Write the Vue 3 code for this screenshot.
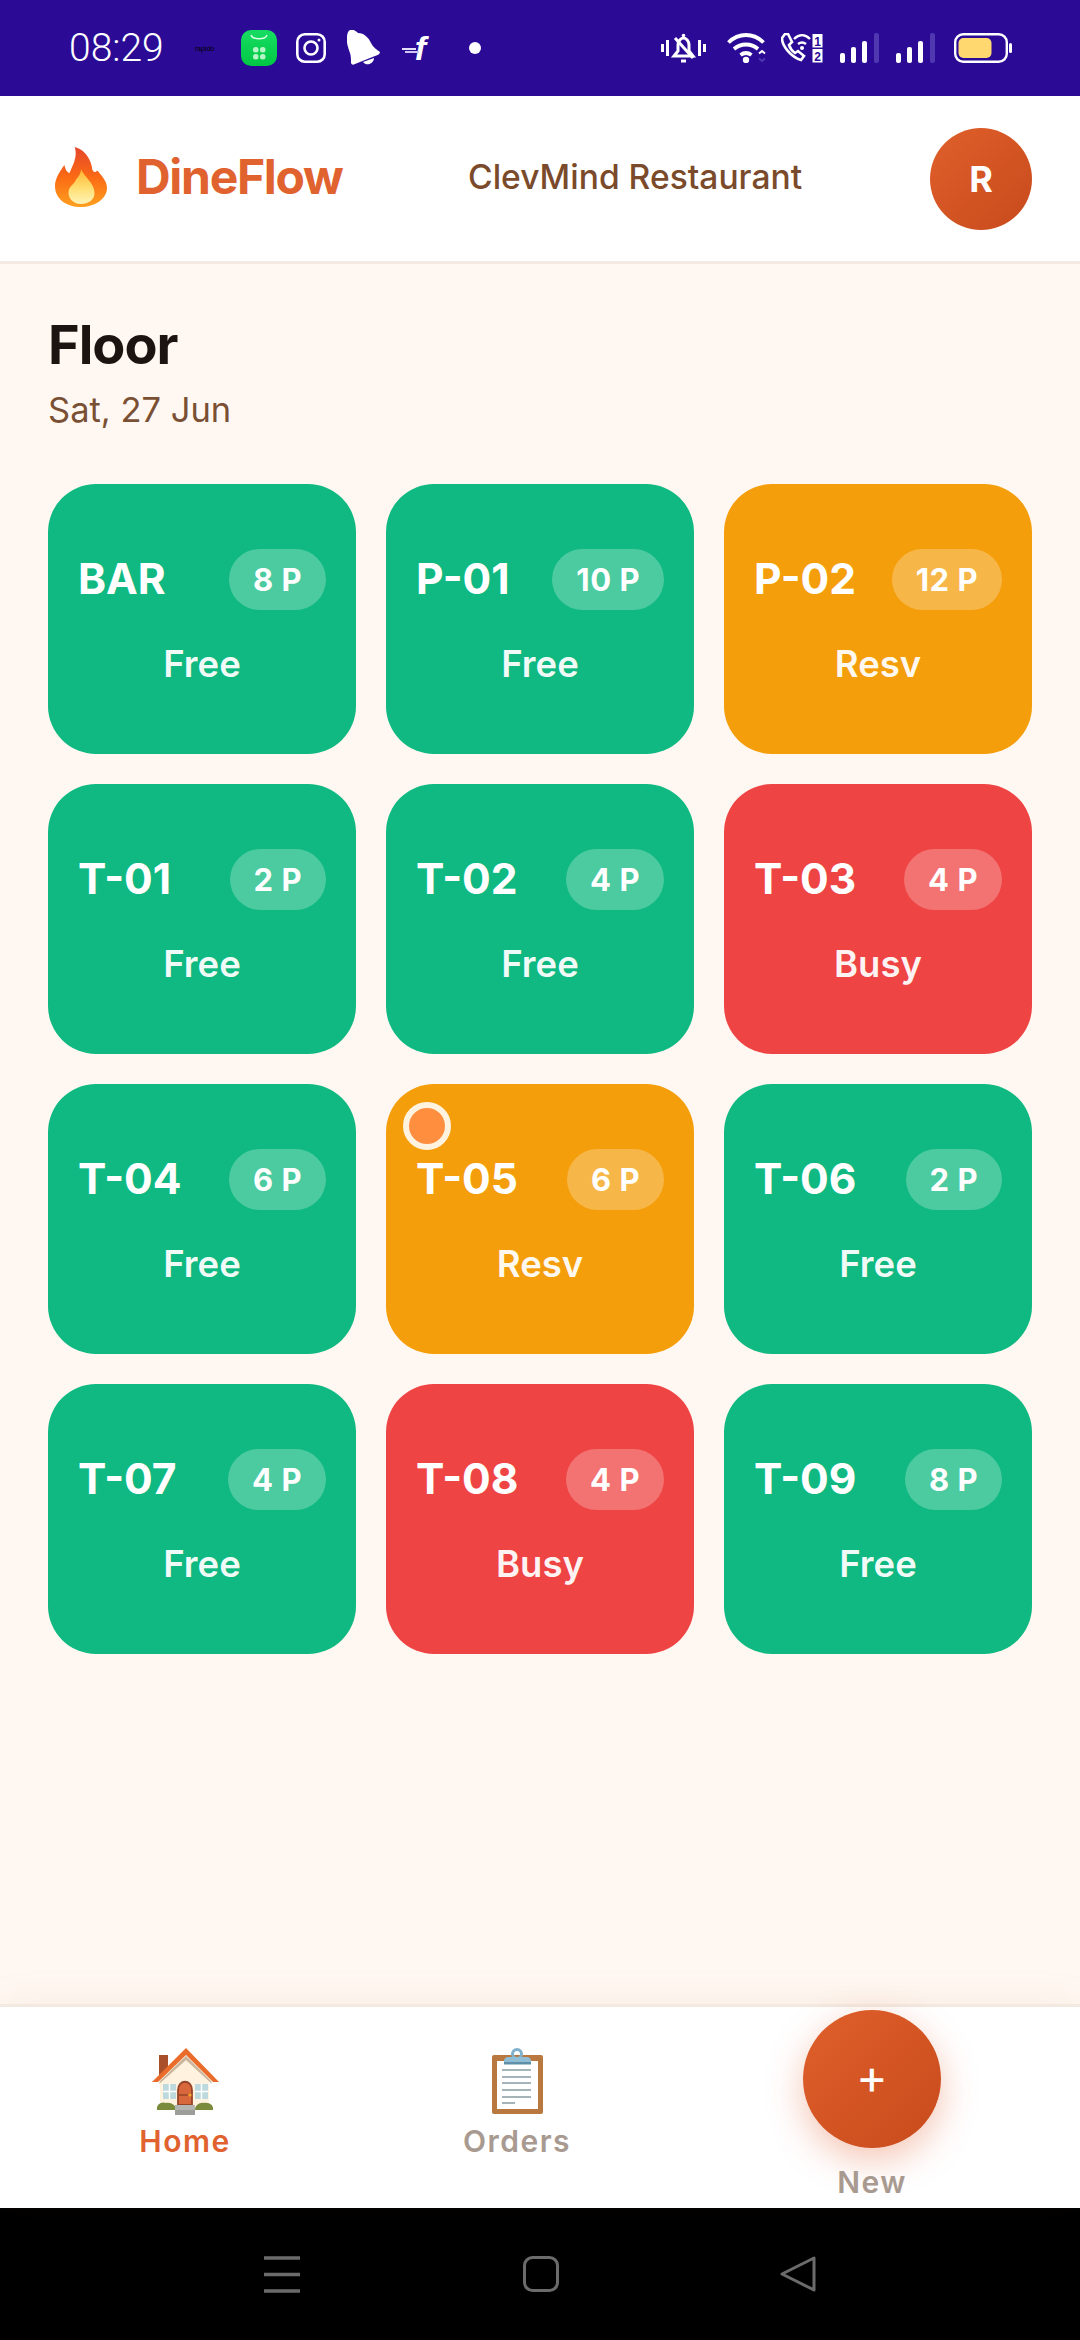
<script setup>
const tables = [
  { name: 'BAR', seats: '8 P', status: 'free' },
  { name: 'P-01', seats: '10 P', status: 'free' },
  { name: 'P-02', seats: '12 P', status: 'resv' },
  { name: 'T-01', seats: '2 P', status: 'free' },
  { name: 'T-02', seats: '4 P', status: 'free' },
  { name: 'T-03', seats: '4 P', status: 'busy' },
  { name: 'T-04', seats: '6 P', status: 'free' },
  { name: 'T-05', seats: '6 P', status: 'resv', touched: true },
  { name: 'T-06', seats: '2 P', status: 'free' },
  { name: 'T-07', seats: '4 P', status: 'free' },
  { name: 'T-08', seats: '4 P', status: 'busy' },
  { name: 'T-09', seats: '8 P', status: 'free' },
]

const labels = { free: 'Free', resv: 'Resv', busy: 'Busy' }
</script>

<template>
  <div class="screen">
    <div class="statusbar">
      <div class="status-left">
        <span class="time">08:29</span>
        <span class="rapido">rapido</span>
        <svg class="ic-store" width="36" height="36" viewBox="0 0 36 36">
          <defs>
            <linearGradient id="storeBg" x1="0" y1="0" x2="0" y2="1">
              <stop offset="0" stop-color="#17dc62" />
              <stop offset="1" stop-color="#00c844" />
            </linearGradient>
          </defs>
          <rect width="36" height="36" rx="10" fill="url(#storeBg)" />
          <path d="M10 5c1.500 5 14.500 5 16 0" fill="none" stroke="#d8ffe4" stroke-width="1.500" />
          <g fill="#b5f5c8">
            <rect x="12" y="17" width="5.500" height="5.500" rx="2.500" />
            <rect x="19" y="17" width="5.500" height="5.500" rx="2.500" />
            <rect x="12" y="24" width="5.500" height="5.500" rx="2.500" />
            <rect x="19" y="24" width="5.500" height="5.500" rx="2.500" />
          </g>
        </svg>
        <svg class="ic-insta" width="30" height="30" viewBox="0 0 30 30" fill="none" stroke="#fff" stroke-width="2.600">
          <rect x="1.300" y="1.300" width="27.400" height="27.400" rx="7.500" />
          <circle cx="15" cy="15" r="6.500" />
          <circle cx="23" cy="7" r="1.500" fill="#fff" stroke="none" />
        </svg>
        <svg class="ic-bell" width="33" height="36" viewBox="0 0 33 36" fill="#fff">
          <path d="M3 0C6-1 9 1 11 3 17 3 22 8 24 13 26 17 29 19 33 22 33 24 31 25 28 26L8 34C6 35 5 35 4 33 4 29 4 26 3 23 1 18-1 11 0 7 0 4 1 1 3 0Z" />
          <path d="M16 32 27 28C27 33 20 37 16 32Z" />
        </svg>
        <span class="ic-f"><i class="speed"></i><b>f</b></span>
        <span class="ic-dot"></span>
      </div>
      <div class="status-right">
        <svg class="ic-mute" width="45" height="30" viewBox="0 0 45 30" fill="none" stroke="#fff" stroke-width="3">
          <path d="M1.500 11v8M6.500 7v16M38.500 7v16M43.500 11v8" />
          <path d="M13 23l4-5v-6c0-4 3-7 5.500-7s5.500 3 5.500 7v6l4 5Z" />
          <path d="M14 5l18 20" />
          <circle cx="22.500" cy="2.500" r="1.800" fill="#fff" stroke="none" />
          <path d="M20 28h5" />
        </svg>
        <svg class="ic-wifi" width="40" height="30" viewBox="0 0 40 30" fill="none" stroke="#fff" stroke-width="3.800">
          <path d="M1.500 9.500c10-10 25-10 35 0" />
          <path d="M7 16c7-6 17-6 24 0" />
          <path d="M13.500 22c3.500-2.500 7.500-2.500 11 0" />
          <circle cx="19" cy="27" r="3.200" fill="#fff" stroke="none" />
          <path d="M32 20.500l3-2.500 3 2.500" stroke-width="2" />
          <path d="M32 25.500l3 2.500 3-2.500" stroke="#4f38b0" stroke-width="2" />
        </svg>
        <svg class="ic-call" width="42" height="30" viewBox="0 0 42 30" fill="none" stroke="#fff">
          <path d="M4 1 1 5c0 8 9 19 19 22l3-4-6-5-3 2c-3-2-5-5-6-8l3-3-4-8Z" stroke-width="2.600" />
          <path d="M13 6c5-5 11-5 16 0M17 11c2.500-2 5.500-2 8 0" stroke-width="2.400" />
          <circle cx="21" cy="15" r="2" fill="#fff" stroke="none" />
          <rect x="31.500" y="1" width="10" height="13.500" fill="#fff" stroke="none" />
          <rect x="31.500" y="16" width="10" height="13.500" fill="#fff" stroke="none" />
          <text x="36.500" y="12.500" text-anchor="middle" class="sim" stroke="none">1</text>
          <text x="36.500" y="27.500" text-anchor="middle" class="sim" stroke="none">2</text>
        </svg>
        <svg class="ic-signal" width="39" height="30" viewBox="0 0 39 30">
          <rect x="0" y="20" width="5" height="10" rx="2" fill="#fff" />
          <rect x="11" y="14" width="5" height="16" rx="2" fill="#fff" />
          <rect x="22" y="8" width="5" height="22" rx="2" fill="#fff" />
          <rect x="34" y="0" width="5" height="30" rx="2" fill="#4f38b0" />
        </svg>
        <svg class="ic-signal" width="39" height="30" viewBox="0 0 39 30">
          <rect x="0" y="20" width="5" height="10" rx="2" fill="#fff" />
          <rect x="11" y="14" width="5" height="16" rx="2" fill="#fff" />
          <rect x="22" y="8" width="5" height="22" rx="2" fill="#fff" />
          <rect x="34" y="0" width="5" height="30" rx="2" fill="#4f38b0" />
        </svg>
        <svg class="ic-battery" width="58" height="30" viewBox="0 0 58 30">
          <rect x="1.200" y="1.200" width="51.600" height="27.600" rx="8" fill="none" stroke="#fff" stroke-width="2.400" />
          <rect x="4.500" y="5" width="33" height="20" rx="5" fill="#ffd970" />
          <rect x="55" y="10" width="3" height="10" rx="1.500" fill="#fff" />
        </svg>
      </div>
    </div>

    <header class="topbar">
      <div class="brand">
        <svg class="flame" width="52" height="60" viewBox="0 0 50 60" preserveAspectRatio="none">
          <defs>
            <linearGradient id="flameOuter" x1="0" y1="0" x2="0" y2="1">
              <stop offset="0" stop-color="#e5472c" />
              <stop offset="0.5" stop-color="#fb6a14" />
              <stop offset="1" stop-color="#ffa01f" />
            </linearGradient>
            <linearGradient id="flameInner" x1="0" y1="0" x2="0" y2="1">
              <stop offset="0" stop-color="#ffb52e" />
              <stop offset="0.6" stop-color="#ffe27a" />
              <stop offset="1" stop-color="#fff3b8" />
            </linearGradient>
          </defs>
          <path d="M19 0C30 3 35 14 36 23 37 25 39 26 40 24 40 24 41 23 42 25 46 30 50 35 50 41 50 52 38 60 25 60 11 60 0 52 0 39 0 31 5 24 9 18 10 22 11 25 14 26 17 18 22 10 19 0Z" fill="url(#flameOuter)" />
          <path d="M25 22C28 30 38 36 38 46 38 53 32 57 25 57 18 57 13 52 13 46 13 39 18 38 20 33 22 30 25 27 25 22Z" fill="url(#flameInner)" />
        </svg>
        <span class="brand-name">DineFlow</span>
      </div>
      <span class="restaurant">ClevMind Restaurant</span>
      <div class="avatar">R</div>
    </header>

    <main class="floor">
      <h1>Floor</h1>
      <p class="date">Sat, 27 Jun</p>
      <div class="grid">
        <div v-for="t in tables" :key="t.name" class="table" :class="t.status">
          <span v-if="t.touched" class="touch"></span>
          <div class="table-top">
            <span class="table-name">{{ t.name }}</span>
            <span class="seats">{{ t.seats }}</span>
          </div>
          <div class="table-status">{{ labels[t.status] }}</div>
        </div>
      </div>
    </main>

    <nav class="bottomnav">
      <div class="nav-item active">
        <svg width="67" height="68" viewBox="0 0 67 68">
          <rect x="7" y="7" width="9" height="20" fill="#a9502a" />
          <path d="M8 62V30L34 7l23 23v32Z" fill="#fff3df" />
          <path d="M34 8 8 33l-1 3 27-24 26 24-1-3Z" fill="#c9b39a" />
          <path d="M34 7 6 34H0L34 0l33 34h-6Z" fill="#ea6c2a" />
          <rect x="11" y="36" width="13" height="15" fill="#bcd9de" />
          <rect x="43" y="36" width="13" height="15" fill="#bcd9de" />
          <path d="M17.500 36v15M11 43.500h13M49.500 36v15M43 43.500h13" stroke="#fff" stroke-width="1.500" />
          <path d="M26 57V42c0-11 14-11 14 0v15Z" fill="#d9673c" stroke="#96452a" stroke-width="1.800" />
          <circle cx="38" cy="47" r="1.600" fill="#f5a623" />
          <path d="M27 47h9" stroke="#96452a" stroke-width="1.500" />
          <path d="M5 62c-1-6 5-9 9-7 5-1 10 2 10 7ZM43 62c0-5 5-8 9-7 5-1 10 2 9 7Z" fill="#7b8b3c" />
          <rect x="23" y="57" width="20" height="5" fill="#b4b4b0" />
          <rect x="23" y="62" width="20" height="5" fill="#9d9d9a" />
        </svg>
        <span>Home</span>
      </div>
      <div class="nav-item">
        <svg class="clipboard" width="51" height="66" viewBox="0 0 51 66">
          <rect y="7" width="51" height="59" rx="2" fill="#b87840" />
          <rect x="5" y="13" width="41" height="48" fill="#fff" />
          <g stroke="#a5b4b8" stroke-width="1.800">
            <path d="M10 22h29M10 29h29M10 35h29M10 42h29M10 49h29M10 55h13" />
          </g>
          <circle cx="25" cy="6" r="4.500" fill="none" stroke="#7fb0cc" stroke-width="3" />
          <path d="M12 16v-3c0-3 2-4 4-4h19c2 0 4 1 4 4v3Z" fill="#8fbdd4" />
          <rect x="12" y="14" width="27" height="2.500" fill="#5f8fa8" />
        </svg>
        <span>Orders</span>
      </div>
      <div class="nav-item new">
        <div class="fab">+</div>
        <span>New</span>
      </div>
    </nav>

    <div class="systembar">
      <svg class="sys-menu" width="36" height="37" viewBox="0 0 36 37" fill="none" stroke="#6b6b6b" stroke-width="3.400">
        <path d="M0 2h36M0 18.500h36M0 35h36" />
      </svg>
      <svg class="sys-home" width="36" height="36" viewBox="0 0 36 36" fill="none" stroke="#6b6b6b" stroke-width="3">
        <rect x="1.500" y="1.500" width="33" height="33" rx="8" />
      </svg>
      <svg class="sys-back" width="36" height="36" viewBox="0 0 36 36" fill="none" stroke="#6b6b6b" stroke-width="3" stroke-linejoin="round">
        <path d="M2 18 34 2v32Z" />
      </svg>
    </div>
  </div>
</template>

<style scoped>
.screen {
  width: 1080px;
  height: 2340px;
  display: flex;
  flex-direction: column;
  overflow: hidden;
  background: #fff8f2;
  font-family: Inter, "Noto Sans", sans-serif;
}

.statusbar {
  height: 96px;
  flex: none;
  background: #2b0b96;
  display: flex;
  align-items: center;
  justify-content: space-between;
  padding: 0 68px 0 69px;
}

.status-left,
.status-right {
  display: flex;
  align-items: center;
}

.time {
  width: 92px;
  color: #fff;
  font-family: Roboto, sans-serif;
  font-weight: 300;
  font-size: 39px;
}

.rapido {
  width: 24px;
  margin-left: 34px;
  color: #000;
  font-size: 7px;
  font-family: "Liberation Sans", sans-serif;
}

.ic-store { margin-left: 22px; }
.ic-insta { margin-left: 19px; }
.ic-bell { margin-left: 21px; }

.ic-f {
  position: relative;
  width: 25px;
  height: 30px;
  margin-left: 22px;
  padding-right: 1px;
  box-sizing: border-box;
  color: #fff;
  font-family: "Liberation Sans", sans-serif;
  font-size: 34px;
  font-style: italic;
  line-height: 30px;
  text-align: right;
}

.speed {
  position: absolute;
  left: 0;
  top: 15px;
  width: 14px;
  height: 2px;
  background: #e4e0f8;
  box-shadow: 3px 3px 0 #cfc8f2;
}

.ic-dot {
  width: 12px;
  height: 12px;
  margin-left: 42px;
  border-radius: 50%;
  background: #fff;
}

.ic-wifi { margin-left: 21px; }
.ic-call { margin-left: 14px; }
.ic-signal { margin-left: 17px; }
.ic-battery { margin-left: 19px; }

.sim {
  fill: #2b0b96;
  font-family: "Liberation Sans", sans-serif;
  font-size: 12px;
  font-weight: 700;
}

.topbar {
  height: 168px;
  flex: none;
  background: #fff;
  border-bottom: 3px solid #f3ebe3;
  display: flex;
  align-items: center;
  padding: 0 48px 0 55px;
  box-sizing: border-box;
}

.brand {
  width: 413px;
  display: flex;
  align-items: center;
  gap: 29px;
}

.flame {
  margin-bottom: 3px;
}

.brand-name {
  margin-bottom: 5px;
  color: #e0622f;
  font-size: 48px;
  font-weight: 700;
  letter-spacing: -1.300px;
}

.restaurant {
  flex: 1;
  margin-bottom: 5px;
  color: #7a4a2b;
  font-size: 33.600px;
  font-weight: 500;
}

.avatar {
  width: 102px;
  height: 102px;
  border-radius: 50%;
  background: linear-gradient(135deg, #e0602b, #c84a1c);
  color: #fff;
  font-size: 36px;
  font-weight: 700;
  display: flex;
  align-items: center;
  justify-content: center;
}

.floor {
  flex: 1;
  padding: 48px 48px 0;
}

h1 {
  margin: 0;
  color: #1c1410;
  font-size: 54px;
  font-weight: 700;
  letter-spacing: -1px;
  line-height: 66px;
}

.date {
  margin: 12px 0 0;
  color: #7a5035;
  font-size: 34.500px;
  line-height: 40px;
}

.grid {
  margin-top: 54px;
  display: grid;
  grid-template-columns: repeat(3, 1fr);
  gap: 30px;
}

.table {
  position: relative;
  height: 270px;
  box-sizing: border-box;
  padding: 0 30px 4px;
  border-radius: 48px;
  color: #fff;
  display: flex;
  flex-direction: column;
  justify-content: center;
  gap: 32px;
}

.table.free { background: #10b981; }
.table.resv { background: #f59e0b; }
.table.busy { background: #ef4444; }

.table-top {
  display: flex;
  align-items: center;
  justify-content: space-between;
}

.table-name {
  margin-bottom: 2px;
  font-size: 42.500px;
  font-weight: 700;
}

.seats {
  height: 61px;
  padding: 0 24px;
  border-radius: 31px;
  background: rgba(255, 255, 255, 0.25);
  font-size: 31px;
  font-weight: 700;
  letter-spacing: 0.500px;
  display: flex;
  align-items: center;
}

.table-status {
  text-align: center;
  font-size: 36.500px;
  font-weight: 600;
  color: rgba(255, 255, 255, 0.95);
}

.touch {
  position: absolute;
  left: 17px;
  top: 18px;
  width: 48px;
  height: 48px;
  box-sizing: border-box;
  border: 6px solid #fff3e0;
  border-radius: 50%;
  background: #ff8f3f;
}

.bottomnav {
  position: relative;
  height: 204px;
  flex: none;
  box-sizing: border-box;
  background: #fff;
  border-top: 3px solid #f3e9e0;
  box-shadow: 0 -6px 36px rgba(160, 90, 40, 0.06);
  display: grid;
  grid-template-columns: 370px 294px 1fr;
}

.nav-item {
  display: flex;
  flex-direction: column;
  align-items: center;
  padding-top: 41px;
  color: #a89a90;
  font-size: 30px;
  font-weight: 600;
  letter-spacing: 1.500px;
}

.nav-item span {
  margin-top: 7px;
}

.clipboard {
  margin-bottom: 2px;
}

.nav-item.active {
  color: #e0622f;
}

.nav-item.new {
  padding-top: 3px;
}

.nav-item.new span {
  margin-top: 16px;
}

.fab {
  width: 138px;
  height: 138px;
  padding-bottom: 5px;
  box-sizing: border-box;
  border-radius: 50%;
  background: linear-gradient(135deg, #e0602b, #c84a1c);
  box-shadow: 0 12px 36px rgba(224, 90, 40, 0.35);
  color: #fff;
  font-size: 48px;
  font-weight: 400;
  letter-spacing: 0;
  display: flex;
  align-items: center;
  justify-content: center;
}

.systembar {
  height: 132px;
  flex: none;
  background: #000;
  display: flex;
  align-items: flex-start;
  padding: 48px 0 0 264px;
  box-sizing: border-box;
}

.sys-home { margin-left: 223px; }
.sys-back { margin-left: 221px; }
</style>

<style>
body {
  background: #fff8f2;
}
</style>
